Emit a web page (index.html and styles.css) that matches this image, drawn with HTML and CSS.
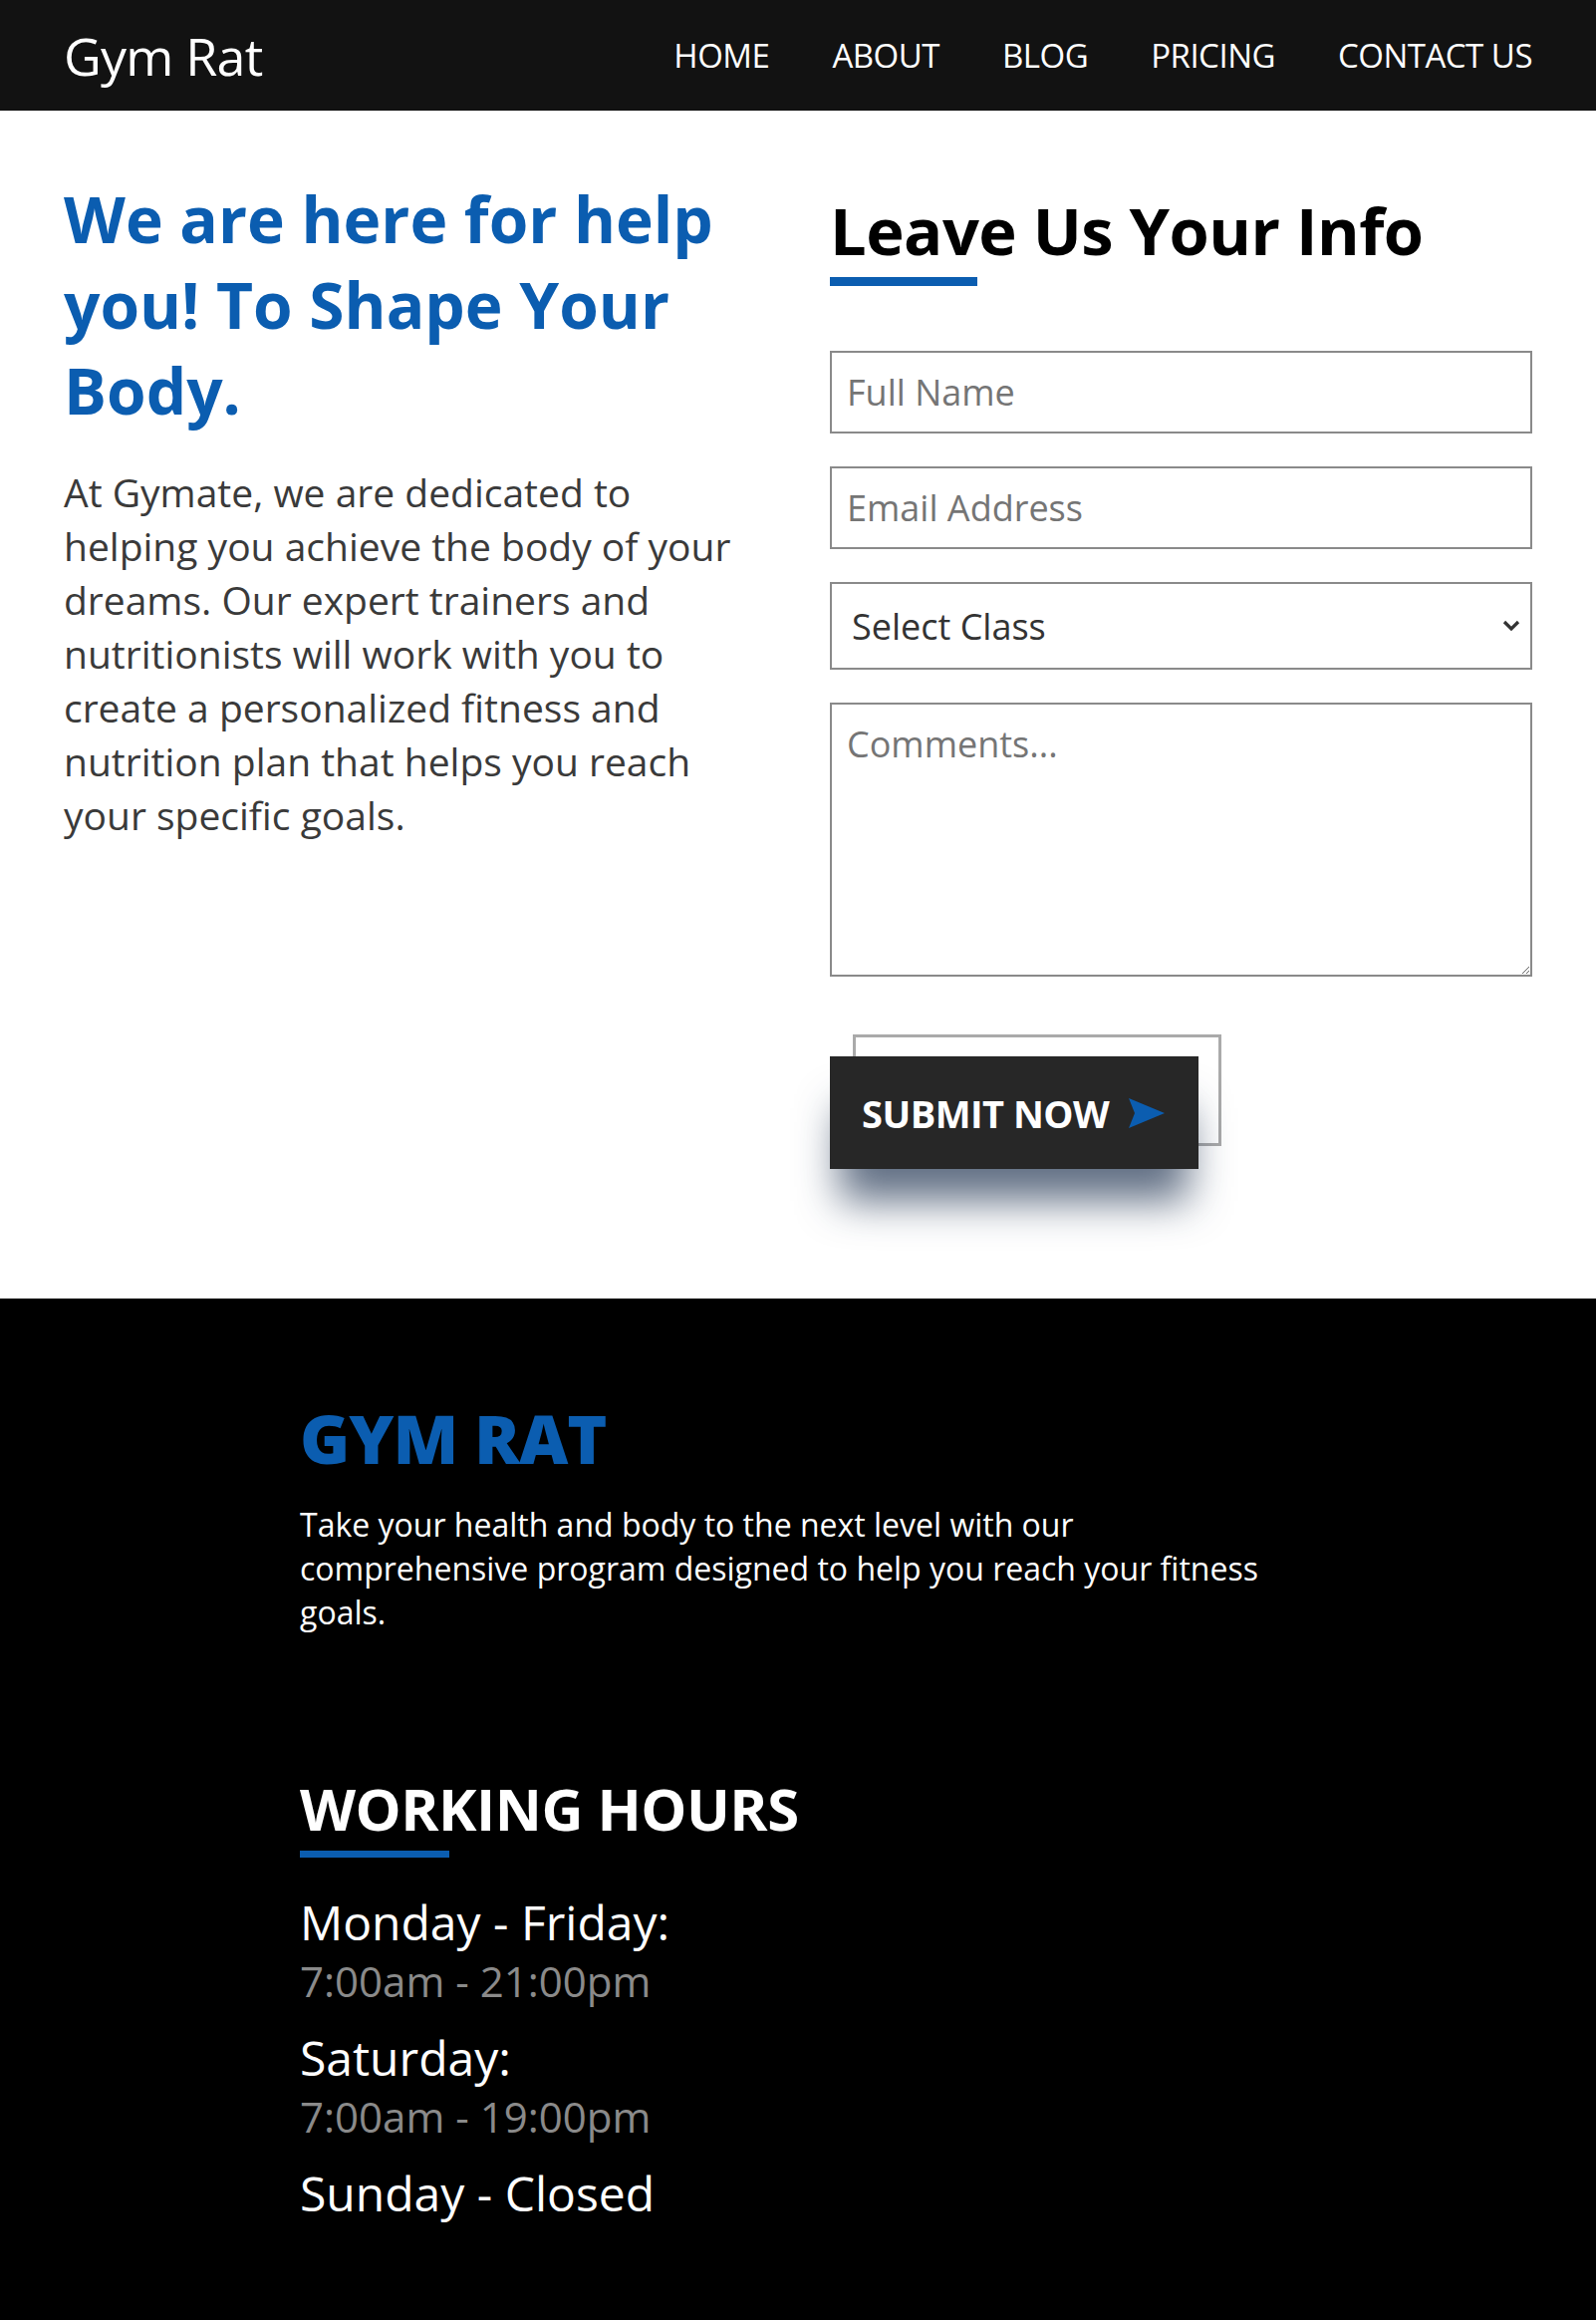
FILE: index.html
```html
<!DOCTYPE html>
<html lang="en">
<head>
<meta charset="utf-8">
<title>Gym Rat</title>
<link rel="stylesheet" href="styles.css">
</head>
<body>
<header class="topbar">
  <div class="brand">Gym Rat</div>
  <nav class="nav">
    <a href="#">HOME</a>
    <a href="#">ABOUT</a>
    <a href="#">BLOG</a>
    <a href="#">PRICING</a>
    <a href="#">CONTACT US</a>
  </nav>
</header>

<main class="contact">
  <section class="intro">
    <h1 class="intro-title">We are here for help you! To Shape Your Body.</h1>
    <p class="intro-text">At Gymate, we are dedicated to helping you achieve the body of your dreams. Our expert trainers and nutritionists will work with you to create a personalized fitness and nutrition plan that helps you reach your specific goals.</p>
  </section>
  <section class="form-col">
    <h2 class="form-title">Leave Us Your Info</h2>
    <div class="title-bar"></div>
    <form class="form">
      <input class="field" type="text" placeholder="Full Name">
      <input class="field" type="email" placeholder="Email Address">
      <div class="select-wrap">
        <select class="field select">
          <option>Select Class</option>
        </select>
        <svg class="chevron" viewBox="0 0 18 12" width="18" height="12"><path d="M2 2 L9 9 L16 2" fill="none" stroke="#333" stroke-width="3.2"/></svg>
      </div>
      <textarea class="field area" placeholder="Comments..."></textarea>
      <div class="submit-wrap">
        <span class="submit-frame"></span>
        <button class="submit" type="button">SUBMIT NOW
          <svg class="arrow" viewBox="0 0 36 30" width="36" height="30"><path d="M0 0 L36 15 L0 30 L6 15 Z" fill="#0b5db0"/></svg>
        </button>
      </div>
    </form>
  </section>
</main>

<footer class="footer">
  <div class="footer-inner">
    <h2 class="footer-brand">GYM RAT</h2>
    <p class="footer-text">Take your health and body to the next level with our comprehensive program designed to help you reach your fitness goals.</p>
    <h3 class="hours-title">WORKING HOURS</h3>
    <div class="hours-bar"></div>
    <ul class="hours">
      <li class="day">Monday - Friday:</li>
      <li class="time">7:00am - 21:00pm</li>
      <li class="day">Saturday:</li>
      <li class="time">7:00am - 19:00pm</li>
      <li class="day">Sunday - Closed</li>
    </ul>
  </div>
</footer>
</body>
</html>
```

FILE: styles.css
```css
* { box-sizing: border-box; }
html, body { margin: 0; padding: 0; background: #000; }
body {
  font-family: "Open Sans", "Noto Sans", sans-serif;
  color: #333;
}

.topbar {
  height: 111px;
  background: #121212;
  display: flex;
  align-items: center;
  justify-content: space-between;
  padding: 0 64px;
}
.brand {
  color: #fff;
  font-size: 52px;
  font-weight: 400;
  letter-spacing: -0.8px;
}
.nav { display: flex; gap: 63px; }
.nav a {
  color: #fff;
  text-decoration: none;
  font-size: 33px;
  letter-spacing: -0.5px;
}

.contact {
  background: #fff;
  display: grid;
  grid-template-columns: 1fr 1fr;
  column-gap: 64px;
  padding: 66px 64px 130px;
}
.intro-title {
  margin: 0;
  color: #0b5db0;
  font-size: 64px;
  line-height: 86px;
  font-weight: 700;
}
.intro-text {
  margin: 32px 0 0;
  font-size: 39px;
  line-height: 54px;
  color: #3a3a3a;
}

.form-title {
  margin: 11px 0 0;
  color: #000;
  font-size: 65px;
  line-height: 86px;
  font-weight: 700;
  letter-spacing: -0.5px;
}
.title-bar {
  width: 148px;
  height: 9px;
  background: #0b5db0;
  margin-top: 4px;
}
.form {
  display: flex;
  flex-direction: column;
  gap: 33px;
  margin-top: 65px;
}
.field {
  display: block;
  width: 100%;
  height: 83px;
  border: 2px solid #8a8a8a;
  border-radius: 0;
  padding: 0 15px;
  font-family: "Open Sans", "Noto Sans", sans-serif;
  font-size: 36px;
  color: #333;
  background: #fff;
  outline: none;
}
.field::placeholder { color: #757575; }
.select-wrap { position: relative; }
.select {
  height: 88px;
  padding: 0 20px;
  appearance: none;
  -webkit-appearance: none;
}
.chevron {
  position: absolute;
  right: 12px;
  top: 38px;
  pointer-events: none;
}
.area {
  height: 275px;
  padding: 15px;
  resize: vertical;
}
.submit-wrap {
  position: relative;
  margin-top: 47px;
  width: 370px;
  height: 113px;
}
.submit-frame {
  position: absolute;
  left: 23px;
  top: -22px;
  width: 370px;
  height: 112px;
  border: 3px solid #aaa;
}
.submit {
  position: relative;
  width: 370px;
  height: 113px;
  border: 0;
  background: #272727;
  color: #fff;
  font-family: "Open Sans", "Noto Sans", sans-serif;
  font-size: 38px;
  font-weight: 700;
  display: flex;
  align-items: center;
  gap: 20px;
  padding: 0 0 0 32px;
  box-shadow: 0 42px 42px -10px rgba(30, 50, 80, 0.7);
  letter-spacing: -0.5px;
}
.arrow { display: block; }

.footer {
  background: #000;
  padding: 95px 0 120px;
}
.footer-inner {
  width: 1000px;
  margin: 0 auto;
}
.footer-brand {
  margin: 0;
  color: #0b5db0;
  font-size: 68px;
  font-weight: 800;
  line-height: 90px;
  letter-spacing: -1px;
}
.footer-text {
  margin: 20px 0 0;
  color: #fff;
  font-size: 32px;
  line-height: 44px;
  width: 980px;
}
.hours-title {
  margin: 140px 0 0;
  color: #fff;
  font-size: 58px;
  font-weight: 700;
  line-height: 70px;
  letter-spacing: -0.5px;
}
.hours-bar {
  width: 150px;
  height: 7px;
  background: #0b5db0;
  margin-top: 7px;
}
.hours {
  list-style: none;
  margin: 34px 0 0;
  padding: 0;
}
.day { color: #fff; font-size: 48px; line-height: 62px; }
.time { color: #8a8a8a; font-size: 42px; line-height: 56px; margin-bottom: 18px; }
```
